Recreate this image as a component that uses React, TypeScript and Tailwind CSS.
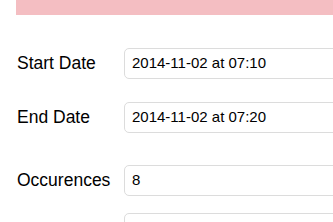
export default function App() {
  const rows = [
    { label: "Start Date", value: "2014-11-02 at 07:10", mt: "mt-[33px]" },
    { label: "End Date", value: "2014-11-02 at 07:20", mt: "mt-[23px]" },
    { label: "Occurences", value: "8", mt: "mt-[32px]" },
    { label: "", value: "", mt: "mt-[17px]" },
  ];
  return (
    <div
      className="h-[222px] w-[333px] overflow-hidden bg-white text-black"
      style={{ fontFamily: '"Liberation Sans", Arial, sans-serif' }}
    >
      <div className="ml-4 h-[15px] bg-[#f4bec2]" />
      {rows.map((r, i) => (
        <div key={i} className={`flex items-center ${r.mt}`}>
          <div className="w-[124px] shrink-0 pl-[17px] text-[17.5px]">{r.label}</div>
          <div className="flex h-[31px] w-[260px] shrink-0 items-center rounded-[5px] border border-[#dcdcdc] pl-[7px] text-[15px]">
            {r.value}
          </div>
        </div>
      ))}
    </div>
  );
}
